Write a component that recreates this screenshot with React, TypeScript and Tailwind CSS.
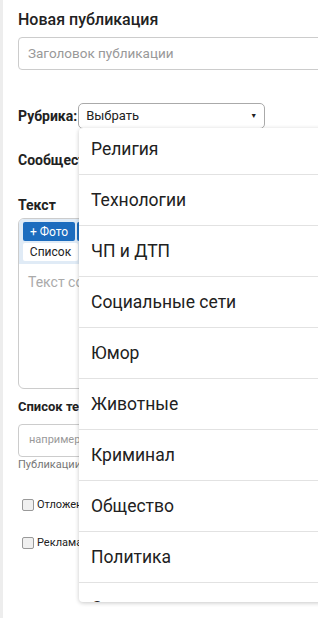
export default function App() {
  const items = [
    "Религия",
    "Технологии",
    "ЧП и ДТП",
    "Социальные сети",
    "Юмор",
    "Животные",
    "Криминал",
    "Общество",
    "Политика",
    "Спорт",
  ];

  return (
    <div className="relative w-[318px] h-[618px] overflow-hidden bg-white font-['Roboto',sans-serif] text-[#222]">
      <div className="h-full border-l-[3px] border-[#ededed] pl-[15px]">
        <h1 className="pt-[10px] text-[16px] leading-[20px] font-medium">Новая публикация</h1>

        <div className="mt-[7px] h-[33px] w-[320px] rounded-[4px] border border-[#ccc] pl-[9px] flex items-center text-[13.5px] text-[#999]">
          Заголовок публикации
        </div>

        <div className="mt-[33px] flex items-center gap-[1px]">
          <span className="text-[14px] font-bold">Рубрика:</span>
          <div className="h-[26px] w-[187px] rounded-[5px] border border-[#aaa] flex items-center justify-between pl-[7px] pr-[7px] text-[13px]">
            <span>Выбрать</span>
            <span className="text-[7px]">▼</span>
          </div>
        </div>

        <div className="mt-[22px] text-[14px] font-bold leading-[18px]">Сообщество</div>

        <div className="mt-[27px] text-[14px] font-bold leading-[18px]">Текст</div>

        <div className="mt-[4px] h-[171px] w-[320px] rounded-[6px] border border-[#ccc] overflow-hidden">
          <div className="bg-[#e0ebf6] px-[4px] pt-[3px] pb-[3px] flex flex-col gap-[2px]">
            <div className="flex gap-[2px]">
              <div className="h-[19px] w-[52px] rounded-[2px] bg-[#1c6cbe] text-white text-[12px] flex items-center justify-center">
                + Фото
              </div>
              <div className="h-[19px] w-[52px] rounded-[2px] bg-[#1c6cbe]" />
            </div>
            <div className="h-[18px] w-[55px] rounded-[2px] bg-white text-[12px] flex items-center justify-center">
              Список
            </div>
          </div>
          <div className="px-[9px] pt-[8px] text-[14px] text-[#aaa]">Текст сообщения</div>
        </div>

        <div className="mt-[10px] text-[13px] font-bold leading-[16px]">Список тегов</div>

        <div className="mt-[9px] h-[33px] w-[320px] rounded-[4px] border border-[#ccc] pl-[10px] flex items-center text-[11px] text-[#999]">
          например
        </div>
        <div className="mt-[1px] text-[11px] leading-[14px] text-[#777]">Публикации</div>

        <div className="mt-[25px] ml-[4px] flex items-center gap-[3px] text-[11px]">
          <span className="h-[12px] w-[12px] rounded-[2px] border border-[#999] bg-[#f0f0f0]" />
          <span>Отложенная</span>
        </div>
        <div className="mt-[21px] ml-[4px] flex items-center gap-[3px] text-[11px]">
          <span className="h-[12px] w-[12px] rounded-[2px] border border-[#999] bg-[#f0f0f0]" />
          <span>Реклама</span>
        </div>
      </div>

      <div className="absolute left-[79px] top-[128px] h-[474px] w-[260px] overflow-hidden rounded-[4px] bg-white shadow-[0_1px_4px_rgba(0,0,0,0.22)]">
        <div className="-mt-[4px]">
          {items.map((it) => (
            <div
              key={it}
              className="h-[51px] border-b border-[#e2e2e2] pl-[12px] flex items-center text-[17.5px] text-[#212121]"
            >
              {it}
            </div>
          ))}
        </div>
      </div>
    </div>
  );
}
